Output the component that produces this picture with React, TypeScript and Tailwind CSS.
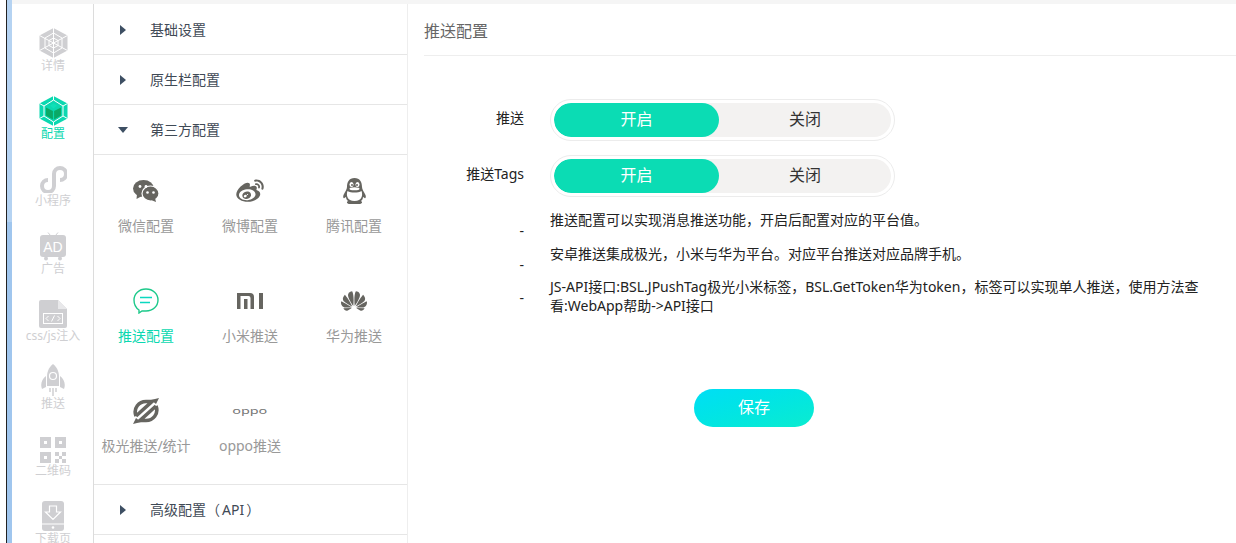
import React from 'react';
import { RiWeiboFill } from 'react-icons/ri';
import { SiHuawei } from 'react-icons/si';

const HexIcon = ({ active }: { active?: boolean }) => (
  <svg viewBox="0 0 29 30" className="h-[30px] w-[29px]">
    <path d="M14.500 0 L28.500 7.500 V22.500 L14.500 30 L0.500 22.500 V7.500 Z" fill={active ? '#0bd8b0' : '#cfcfd2'} />
    <g stroke="#fff" strokeWidth="1" fill="none">
      {active ? (
        <path d="M14.500 0 V4 M0.500 7.500 L5 10 M28.500 7.500 L24 10 M0.500 22.500 L5 20 M28.500 22.500 L24 20 M14.500 30 V26 M14.500 4 L24 10 V20 L14.500 26 L5 20 V10 Z" />
      ) : (
        <path d="M14.500 0 V30 M0.500 7.500 L28.500 22.500 M28.500 7.500 L0.500 22.500 M14.500 5 L23 10 V20 L14.500 25 L6 20 V10 Z M14.500 10 L19 12.500 V17.500 L14.500 20 L10 17.500 V12.500 Z" />
      )}
    </g>
    {active && (
      <>
        <path d="M7 11.500 L13.900 15 V23.500 L7 19.500 Z M22 11.500 L15.100 15 V23.500 L22 19.500 Z" fill="#0aa966" />
        <path d="M11 9.500 L14.500 7.500 L18 9.500 L14.500 12.500 Z" fill="#0fe0b8" />
      </>
    )}
  </svg>
);

const MiniIcon = () => (
  <svg viewBox="-1 -1 28 28" className="h-7 w-7" fill="none" stroke="#cfcfd2" strokeWidth="4">
    <path d="M8 14 A6 6 0 1 0 14 20 V8 A6 6 0 1 1 20 14" />
  </svg>
);

const AdIcon = () => (
  <svg viewBox="0 0 26 29" className="h-[29px] w-[26px]">
    <path d="M8 0.500 L10.500 3.500 M18 0.500 L15.500 3.500" stroke="#cfcfd2" strokeWidth="1" />
    <rect y="3" width="26" height="22" rx="3" fill="#cfcfd2" />
    <circle cx="6" cy="26.500" r="2" fill="#cfcfd2" />
    <circle cx="20" cy="26.500" r="2" fill="#cfcfd2" />
    <text x="13" y="19.500" textAnchor="middle" fontSize="14" fill="#fff" fontFamily="Liberation Sans">AD</text>
  </svg>
);

const CodeIcon = () => (
  <svg viewBox="0 0 28 28" className="h-7 w-7">
    <path d="M2 0 H19 L28 9 V26 A2 2 0 0 1 26 28 H2 A2 2 0 0 1 0 26 V2 A2 2 0 0 1 2 0 Z" fill="#cfcfd2" />
    <path d="M19 0 L28 9 H19 Z" fill="#e8e8ea" />
    <rect x="4.500" y="13.500" width="19" height="10" fill="none" stroke="#fff" strokeWidth="1" />
    <path d="M9.500 16 L7 18.500 L9.500 21 M18.500 16 L21 18.500 L18.500 21 M15.500 15.500 L12.500 21.500" fill="none" stroke="#fff" strokeWidth="1" />
  </svg>
);

const RocketIcon = () => (
  <svg viewBox="0 0 24 32" className="h-8 w-6">
    <path d="M12 0 C17 4 18 9 18 13 V22 H6 V13 C6 9 7 4 12 0 Z" fill="#cfcfd2" />
    <path d="M5 12 L5 23 L1 25 C-1 20 1 15 5 12 Z M19 12 L19 23 L23 25 C25 20 23 15 19 12 Z" fill="#cfcfd2" />
    <circle cx="12" cy="12" r="3.500" fill="none" stroke="#fff" strokeWidth="1.200" />
    <path d="M9 24 V28 M12 24 V32 M15 24 V28" stroke="#cfcfd2" strokeWidth="1.500" />
  </svg>
);

const QrIcon = () => (
  <svg viewBox="0 0 26 26" className="h-[26px] w-[26px]" fill="#cfcfd2">
    <path fillRule="evenodd" d="M0 0 H11 V11 H0 Z M4 4 V7 H7 V4 Z M15 0 H26 V11 H15 Z M19 4 V7 H22 V4 Z M0 15 H11 V26 H0 Z M4 19 V22 H7 V19 Z" />
    <path d="M15 15 H19 V19 H15 Z M22 15 H26 V19 H22 Z M19 19 H22 V22 H19 Z M15 22 H19 V26 H15 Z M22 22 H26 V26 H22 Z" />
  </svg>
);

const DownloadIcon = () => (
  <svg viewBox="0 0 22 30" className="h-[30px] w-[22px]">
    <rect width="22" height="30" rx="3" fill="#cfcfd2" />
    <path d="M7.500 5 H14.500 V11 H18.500 L11 18.500 L3.500 11 H7.500 Z" fill="none" stroke="#fff" strokeWidth="1.200" />
    <path d="M0 23 H22" stroke="#fff" strokeWidth="1" />
    <circle cx="11" cy="26.500" r="1.300" fill="#fff" />
  </svg>
);

const WechatIcon = () => (
  <svg viewBox="0 0 26 22" className="h-[22px] w-[26px]">
    <ellipse cx="10.500" cy="8.500" rx="10.500" ry="8.500" fill="#666560" />
    <path d="M4 14 L3.500 19 L9 16 Z" fill="#666560" />
    <ellipse cx="17.500" cy="13.500" rx="8.500" ry="7.500" fill="#666560" stroke="#fff" strokeWidth="1.200" />
    <path d="M22 18 L23 22 L18 20 Z" fill="#666560" />
    <circle cx="7" cy="6.500" r="1.400" fill="#fff" />
    <circle cx="13" cy="6.500" r="1.400" fill="#fff" />
    <circle cx="14.500" cy="12.500" r="1.300" fill="#fff" />
    <circle cx="20.500" cy="12.500" r="1.300" fill="#fff" />
  </svg>
);

const QqIcon = () => (
  <svg viewBox="0 0 25 26" className="h-[26px] w-[25px]">
    <path d="M12.500 0 C18 0 20 4 20 9 C20 11 22 14 23.500 17 C24.500 20 23 21 22 19.500 L21 19 C21 21 20 22 19 23 C21 24 20 26 17 26 H8 C5 26 4 24 6 23 C5 22 4 21 4 19 L3 19.500 C2 21 0.500 20 1.500 17 C3 14 5 11 5 9 C5 4 7 0 12.500 0 Z" fill="#666560" />
    <path d="M5.500 13 C9 15 16 15 19.500 13 C21 17 20 23 12.500 23 C5 23 4 17 5.500 13 Z" fill="#fff" />
    <ellipse cx="9.500" cy="6.500" rx="2" ry="2.500" fill="#fff" />
    <ellipse cx="15.500" cy="6.500" rx="2" ry="2.500" fill="#fff" />
    <circle cx="10" cy="7" r="1" fill="#666560" />
    <circle cx="15" cy="7" r="1" fill="#666560" />
    <ellipse cx="12.500" cy="10.800" rx="5" ry="1.500" fill="#fff" />
  </svg>
);

const PushIcon = () => (
  <svg viewBox="0 0 26 26" className="h-[26px] w-[26px]" fill="none">
    <path d="M13 1 C20 1 25 6 25 12 C25 18 20 23 13 23 H9 L6 25 V22 C3 20 1 16 1 12 C1 6 6 1 13 1 Z" stroke="#1cc98a" strokeWidth="1.400" />
    <path d="M7 9.500 H19 M7 14.500 H17" stroke="#0bd8c0" strokeWidth="1.600" />
  </svg>
);

const MiIcon = () => (
  <svg viewBox="0 0 26 16" className="h-4 w-[26px]" fill="#666560">
    <path d="M0 0 H13 A4 4 0 0 1 17 4 V16 H13.500 V5 A2 2 0 0 0 11.500 3 H3.500 V16 H0 Z" />
    <rect x="7" y="6" width="3.500" height="10" />
    <rect x="22" width="4" height="16" />
  </svg>
);

const JiguangIcon = () => (
  <svg viewBox="0 0 28 26" className="h-[26px] w-7" fill="none" stroke="#666560" strokeWidth="3.600">
    <path d="M4 18 C1 10 7 3.500 14 3.500 L20 3.500 L4 18 M24 8 C27 16 21 22.500 14 22.500 L8 22.500 L24 8" />
    <path d="M19 2 L27 0 L24 6 Z M9 24 L1 26 L4 20 Z" fill="#666560" strokeWidth="0" />
  </svg>
);

const sideItems: { label: string; icon: React.ReactNode; active?: boolean }[] = [
  { label: '详情', icon: <HexIcon /> },
  { label: '配置', icon: <HexIcon active />, active: true },
  { label: '小程序', icon: <MiniIcon /> },
  { label: '广告', icon: <AdIcon /> },
  { label: 'css/js注入', icon: <CodeIcon /> },
  { label: '推送', icon: <RocketIcon /> },
  { label: '二维码', icon: <QrIcon /> },
  { label: '下载页', icon: <DownloadIcon /> },
];

const gridItems: { label: string; icon: React.ReactNode; active?: boolean }[] = [
  { label: '微信配置', icon: <WechatIcon /> },
  { label: '微博配置', icon: <RiWeiboFill className="h-[30px] w-[30px] text-[#666560]" /> },
  { label: '腾讯配置', icon: <QqIcon /> },
  { label: '推送配置', icon: <PushIcon />, active: true },
  { label: '小米推送', icon: <MiIcon /> },
  { label: '华为推送', icon: <SiHuawei className="h-[26px] w-[26px] text-[#666560]" /> },
  { label: '极光推送/统计', icon: <JiguangIcon /> },
  { label: 'oppo推送', icon: <span className="scale-x-[1.8] text-[8px] leading-none text-[#777]">oppo</span> },
];

const notes = [
  '推送配置可以实现消息推送功能，开启后配置对应的平台值。',
  '安卓推送集成极光，小米与华为平台。对应平台推送对应品牌手机。',
  'JS-API接口:BSL.JPushTag极光小米标签，BSL.GetToken华为token，标签可以实现单人推送，使用方法查看:WebApp帮助->API接口',
];

const AccordionRow = ({ label, open }: { label: React.ReactNode; open?: boolean }) => (
  <div className="flex h-[50px] items-center border-b border-[#e6e6e6]">
    <div className="flex w-14 justify-center pl-[1px]">
      {open ? (
        <span className="h-0 w-0 border-x-[5.5px] border-t-[6px] border-x-transparent border-t-[#3d4f63]" />
      ) : (
        <span className="h-0 w-0 border-y-[5px] border-l-[6px] border-y-transparent border-l-[#3d4f63]" />
      )}
    </div>
    <span className="text-sm text-[#3f4a56]">{label}</span>
  </div>
);

const Toggle = () => (
  <div className="flex h-[42px] w-[345px] rounded-full border border-[#ececec] p-[3px]">
    <div className="flex w-full overflow-hidden rounded-full bg-[#f3f2f1] text-base">
      <div className="flex w-[165px] items-center justify-center rounded-full bg-[#0bdcb4] pb-[2px] text-white">开启</div>
      <div className="flex flex-1 items-center justify-center pb-[2px] text-[#333]">关闭</div>
    </div>
  </div>
);

export default function App() {
  return (
    <div
      className="flex h-[543px] w-[1236px] overflow-hidden bg-white"
      style={{ fontFamily: '"Noto Sans", "Noto Sans CJK SC", sans-serif' }}
    >
      <div className="w-[6px] shrink-0" />
      <div className="flex w-[6px] shrink-0 flex-col border-l border-[#222]">
        <div className="h-[222px] bg-[#b5d3f2]" />
        <div className="flex-1 bg-[#a0c6ee]" />
      </div>
      <div className="flex min-w-0 flex-1 flex-col">
        <div className="h-1 shrink-0 bg-[#f5f5f5]" />
        <div className="flex min-h-0 flex-1">
          <aside className="w-[82px] shrink-0 border-r border-[#dcdcdc] pl-px pt-[23px]">
            {sideItems.map((item) => (
              <div key={item.label} className="flex h-[67.5px] flex-col items-center">
                <div className="flex h-[31px] items-end justify-center">{item.icon}</div>
                <span className={`whitespace-nowrap text-xs leading-4 ${item.active ? 'text-[#0bd8b0]' : 'text-[#cfcfd2]'}`}>{item.label}</span>
              </div>
            ))}
          </aside>
          <nav className="w-[314px] shrink-0 border-r border-[#eee] pt-px">
            <AccordionRow label="基础设置" />
            <AccordionRow label="原生栏配置" />
            <AccordionRow label="第三方配置" open />
            <div className="grid h-[330px] grid-cols-[104px_104px_104px] content-start border-b border-[#e6e6e6]">
              {gridItems.map((item) => (
                <div key={item.label} className="flex h-[110px] flex-col items-center pt-[20px]">
                  <div className="flex h-[32px] items-center justify-center">{item.icon}</div>
                  <span className={`mt-[9px] whitespace-nowrap text-sm leading-5 ${item.active ? 'text-[#0bd8b0]' : 'text-[#999]'}`}>{item.label}</span>
                </div>
              ))}
            </div>
            <AccordionRow label={<>高级配置（<span className="px-[2px]">API</span>）</>} />
          </nav>
          <main className="min-w-0 flex-1">
            <div className="ml-4 flex h-[52px] items-center border-b border-[#eee] pt-[2px] text-base text-[#666]">推送配置</div>
            <div className="pt-[43px]">
              <div className="mb-[14px] flex items-center">
                <label className="w-[116px] pb-1 text-right text-sm text-[#222]">推送</label>
                <div className="ml-[26px]"><Toggle /></div>
              </div>
              <div className="mb-[13px] flex items-center">
                <label className="w-[116px] pb-1 text-right text-sm text-[#222]">推送Tags</label>
                <div className="ml-[26px]"><Toggle /></div>
              </div>
              <div className="flex flex-col gap-[14.500px]">
                {notes.map((note) => (
                  <div key={note} className="flex">
                    <div className="h-[19px] w-[116px] pt-[11px] text-right text-sm leading-5 text-[#222]">-</div>
                    <p className="ml-[26px] w-[660px] text-sm leading-[19px] text-[#222]">{note}</p>
                  </div>
                ))}
              </div>
              <button className="ml-[286px] mt-[74px] h-[38px] w-[120px] rounded-full bg-gradient-to-br from-[#00def5] to-[#0ceccf] pb-[2px] text-base text-white">保存</button>
            </div>
          </main>
        </div>
      </div>
    </div>
  );
}
